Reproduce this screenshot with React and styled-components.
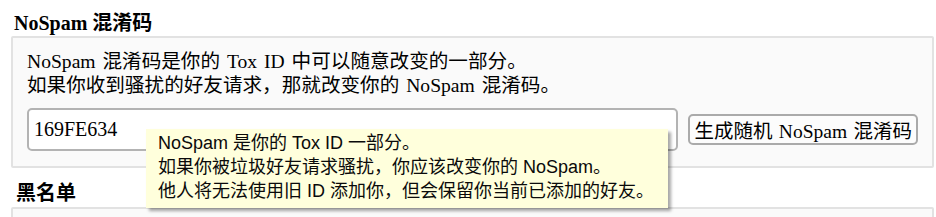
import React from "react";
import styled, { createGlobalStyle } from "styled-components";

const Global = createGlobalStyle`
  html, body { margin: 0; padding: 0; background: #ffffff; }
  body { font-family: "Liberation Serif", "Noto Sans CJK SC", serif; color: #000; }
`;

const Page = styled.div`
  position: relative;
  width: 936px;
  height: 217px;
  overflow: hidden;
  padding: 0 2px 0 11px;
  box-sizing: border-box;
`;

const Heading = styled.div`
  font-family: "Liberation Serif", "Noto Sans CJK SC", serif;
  font-weight: bold;
  font-size: 20px;
  line-height: 26px;
  padding: ${(p) => p.$pad};
  margin-left: ${(p) => p.$indent}px;
  white-space: nowrap;
`;

const Group = styled.div`
  border: 2px solid #e2e2e2;
  border-radius: 2px;
  background: #fafafa;
  padding: ${(p) => p.$pad || "12px 14px 15px 14px"};
  min-height: ${(p) => p.$minH || 0}px;
`;

const Para = styled.div`
  font-size: 19.6px;
  word-spacing: 2px;
  line-height: 24px;
  white-space: nowrap;
`;

const Row = styled.div`
  display: flex;
  align-items: center;
  gap: 10px;
  margin-top: 10px;
`;

const Input = styled.div`
  flex: 1;
  height: 43px;
  box-sizing: border-box;
  border: 2px solid #b3b3b3;
  border-radius: 5px;
  background: #fff;
  display: flex;
  align-items: center;
  padding-left: 5px;
  font-size: 20px;
`;

const Button = styled.div`
  height: 31px;
  box-sizing: border-box;
  border: 2px solid #aaaaaa;
  border-radius: 5px;
  background: #fcfcfc;
  display: flex;
  align-items: center;
  padding: 0 4px;
  font-size: 19.5px;
  word-spacing: 1.5px;
  white-space: nowrap;
`;

const Tooltip = styled.div`
  position: absolute;
  left: 146px;
  top: 129px;
  width: 522px;
  height: 79px;
  box-sizing: border-box;
  background: #ffffdc;
  padding: 2px 10px 5px 12px;
  box-shadow: 3px 3px 3px rgba(0, 0, 0, 0.35);
  font-family: "Liberation Sans", "Noto Sans CJK SC", sans-serif;
  font-size: 18px;
  line-height: 24px;
  color: #0a0a0a;
  white-space: nowrap;
`;

export default function App() {
  return (
    <>
      <Global />
      <Page>
        <Heading $pad="10px 0 0 0" $indent={3}>NoSpam 混淆码</Heading>
        <Group>
          <Para>NoSpam 混淆码是你的 Tox ID 中可以随意改变的一部分。</Para>
          <Para>如果你收到骚扰的好友请求，那就改变你的 NoSpam 混淆码。</Para>
          <Row>
            <Input>169FE634</Input>
            <Button>生成随机 NoSpam 混淆码</Button>
          </Row>
        </Group>
        <Heading $pad="12px 0 1px 0" $indent={5}>黑名单</Heading>
        <Group $minH={40} $pad="0" />
        <Tooltip>
          <div>NoSpam 是你的 Tox ID 一部分。</div>
          <div>如果你被垃圾好友请求骚扰，你应该改变你的 NoSpam。</div>
          <div>他人将无法使用旧 ID 添加你，但会保留你当前已添加的好友。</div>
        </Tooltip>
      </Page>
    </>
  );
}
